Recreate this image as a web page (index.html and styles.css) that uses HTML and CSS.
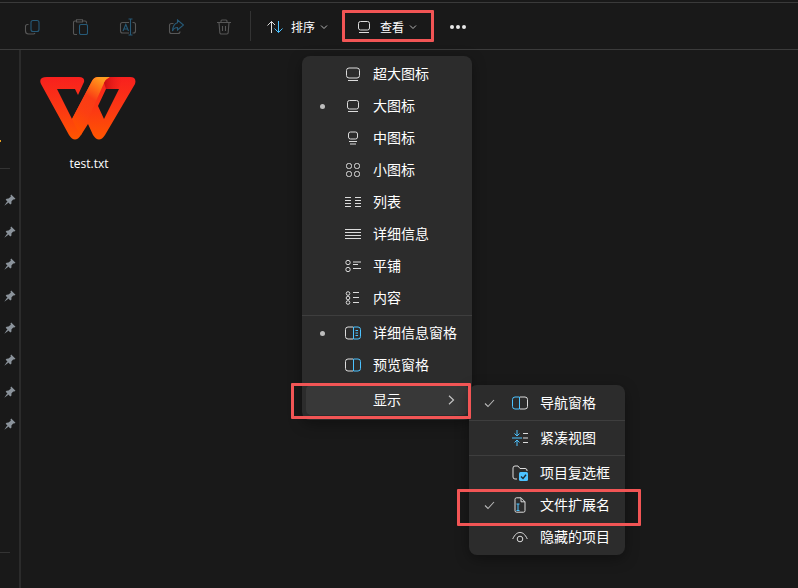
FILE: index.html
```html
<!DOCTYPE html>
<html lang="zh-CN">
<head>
<meta charset="utf-8">
<title>查看</title>
<link rel="stylesheet" href="styles.css">
</head>
<body>
<div class="page">
  <div class="topline"></div>
  <header class="toolbar">
    <div class="tool"><svg class="ic" width="16" height="16" viewBox="0 0 16 16" fill="none"><path class="dim" d="M4.500 5.500 H3.500 A2 2 0 0 0 1.500 7.500 V12 A3 3 0 0 0 4.500 15 H9 A2 2 0 0 0 11 14"/><rect class="dimblue" x="7" y="1.500" width="8" height="11" rx="2"/></svg></div>
    <div class="tool"><svg class="ic" width="16" height="16" viewBox="0 0 16 16" fill="none"><path class="dim" d="M4 2 H3 A1.500 1.500 0 0 0 1.500 3.500 V14 A1.500 1.500 0 0 0 3 15.500 H5 M11 2 H13 A1.500 1.500 0 0 1 14.500 3.500 V4.500 M4.500 .8 H10.500 V3 H4.500 Z"/><rect class="dimblue" x="7.500" y="5.500" width="8" height="10" rx="1.500"/></svg></div>
    <div class="tool"><svg class="ic" width="18" height="18" viewBox="0 0 18 18" fill="none"><path class="dim" d="M10 4.500 H3.500 A2 2 0 0 0 1.500 6.500 V13 A2 2 0 0 0 3.500 15 H10 M13.500 4.500 H14.500 A2 2 0 0 1 16.500 6.500 V13 A2 2 0 0 1 14.500 15 H13.500"/><path class="dimblue" d="M11.500 1 V17 M9.500 1 H13.500 M9.500 17 H13.500 M4 13 L6.800 6.500 L9.500 13 M5 11 H8.500"/></svg></div>
    <div class="tool"><svg class="ic" width="16" height="16" viewBox="0 0 16 16" fill="none"><path class="dim" d="M5.500 4.500 H3.500 A2 2 0 0 0 1.500 6.500 V12.500 A2 2 0 0 0 3.500 14.500 H10 A2 2 0 0 0 12 12.500"/><path class="dimblue" d="M9.500 1 L15.500 6 L9.500 11 V8.500 C7.500 8.500 5.500 9.500 4.500 12 C4.800 8 6.500 4.500 9.500 3.800 Z"/></svg></div>
    <div class="tool"><svg class="ic" width="16" height="16" viewBox="0 0 16 16" fill="none"><path class="dim" d="M1 3.500 H15 M5 3.500 V2 A1 1 0 0 1 6 1 H10 A1 1 0 0 1 11 2 V3.500 M3 3.500 L3.800 13.500 A1.500 1.500 0 0 0 5.300 15 H10.700 A1.500 1.500 0 0 0 12.200 13.500 L13 3.500 M6.500 7 V12 M9.500 7 V12"/></svg></div>
    <div class="tb-divider"></div>
    <div class="tb-btn sort">
      <svg class="ic" width="16" height="14" viewBox="0 0 16 14" fill="none"><path class="line" d="M4.500 13 V1.500 M0.500 5.500 L4.500 1.500 L8 5"/><path class="blue" d="M11.500 1 V12.500 M7.500 8.500 L11.500 12.500 L15.500 8.500"/></svg>
      <span class="tb-label">排序</span>
      <svg class="chev" width="8" height="6" viewBox="0 0 8 6" fill="none"><path d="M1 1.500 L4 4.500 L7 1.500"/></svg>
    </div>
    <div class="tb-btn view">
      <svg class="ic" width="14" height="14" viewBox="0 0 14 14" fill="none"><rect class="line" x="1.500" y="1.500" width="11" height="8.500" rx="2"/><path class="line" d="M2 12.500 H12"/></svg>
      <span class="tb-label">查看</span>
      <svg class="chev" width="8" height="6" viewBox="0 0 8 6" fill="none"><path d="M1 1.500 L4 4.500 L7 1.500"/></svg>
    </div>
    <div class="dots"><i></i><i></i><i></i></div>
  </header>

  <div class="main">
    <aside class="sidebar">
      <div class="spark"></div>
      <div class="side-sep first"></div>
      <ul class="pins">
        <li><svg class="pin" width="12" height="12" viewBox="0 0 12 12"><path d="M7.200 .5 L11.500 4.800 L10.200 5.600 L9.200 5.400 L7.400 7.600 L7.500 9.500 L6.300 10.500 L1.700 5.800 L2.600 4.700 L4.500 4.600 L6.800 2.800 L6.500 1.500 Z M3.200 7.600 L.3 11.700 L4.400 8.800 Z"/></svg></li>
        <li><svg class="pin" width="12" height="12" viewBox="0 0 12 12"><path d="M7.200 .5 L11.500 4.800 L10.200 5.600 L9.200 5.400 L7.400 7.600 L7.500 9.500 L6.300 10.500 L1.700 5.800 L2.600 4.700 L4.500 4.600 L6.800 2.800 L6.500 1.500 Z M3.200 7.600 L.3 11.700 L4.400 8.800 Z"/></svg></li>
        <li><svg class="pin" width="12" height="12" viewBox="0 0 12 12"><path d="M7.200 .5 L11.500 4.800 L10.200 5.600 L9.200 5.400 L7.400 7.600 L7.500 9.500 L6.300 10.500 L1.700 5.800 L2.600 4.700 L4.500 4.600 L6.800 2.800 L6.500 1.500 Z M3.200 7.600 L.3 11.700 L4.400 8.800 Z"/></svg></li>
        <li><svg class="pin" width="12" height="12" viewBox="0 0 12 12"><path d="M7.200 .5 L11.500 4.800 L10.200 5.600 L9.200 5.400 L7.400 7.600 L7.500 9.500 L6.300 10.500 L1.700 5.800 L2.600 4.700 L4.500 4.600 L6.800 2.800 L6.500 1.500 Z M3.200 7.600 L.3 11.700 L4.400 8.800 Z"/></svg></li>
        <li><svg class="pin" width="12" height="12" viewBox="0 0 12 12"><path d="M7.200 .5 L11.500 4.800 L10.200 5.600 L9.200 5.400 L7.400 7.600 L7.500 9.500 L6.300 10.500 L1.700 5.800 L2.600 4.700 L4.500 4.600 L6.800 2.800 L6.500 1.500 Z M3.200 7.600 L.3 11.700 L4.400 8.800 Z"/></svg></li>
        <li><svg class="pin" width="12" height="12" viewBox="0 0 12 12"><path d="M7.200 .5 L11.500 4.800 L10.200 5.600 L9.200 5.400 L7.400 7.600 L7.500 9.500 L6.300 10.500 L1.700 5.800 L2.600 4.700 L4.500 4.600 L6.800 2.800 L6.500 1.500 Z M3.200 7.600 L.3 11.700 L4.400 8.800 Z"/></svg></li>
        <li><svg class="pin" width="12" height="12" viewBox="0 0 12 12"><path d="M7.200 .5 L11.500 4.800 L10.200 5.600 L9.200 5.400 L7.400 7.600 L7.500 9.500 L6.300 10.500 L1.700 5.800 L2.600 4.700 L4.500 4.600 L6.800 2.800 L6.500 1.500 Z M3.200 7.600 L.3 11.700 L4.400 8.800 Z"/></svg></li>
        <li><svg class="pin" width="12" height="12" viewBox="0 0 12 12"><path d="M7.200 .5 L11.500 4.800 L10.200 5.600 L9.200 5.400 L7.400 7.600 L7.500 9.500 L6.300 10.500 L1.700 5.800 L2.600 4.700 L4.500 4.600 L6.800 2.800 L6.500 1.500 Z M3.200 7.600 L.3 11.700 L4.400 8.800 Z"/></svg></li>
      </ul>
      <div class="side-sep last"></div>
    </aside>
    <div class="side-rule"></div>
    <section class="files">
      <figure class="file">
        <svg class="logo" width="96" height="64" viewBox="40 76 96 64">
          <defs>
            <linearGradient id="wBase" x1="0" y1="0" x2="0" y2="1"><stop offset="0" stop-color="#f8201e"/><stop offset="0.55" stop-color="#fc3a12"/><stop offset="1" stop-color="#ff5600"/></linearGradient>
            <linearGradient id="wStrand" x1="0.7" y1="0" x2="0.3" y2="1"><stop offset="0" stop-color="#ff9c20"/><stop offset="0.18" stop-color="#ff7016"/><stop offset="0.38" stop-color="#f93c16"/><stop offset="0.65" stop-color="#fc3f12"/><stop offset="1" stop-color="#ff5200"/></linearGradient>
            <linearGradient id="wShade" x1="0" y1="0" x2="1" y2="0"><stop offset="0" stop-color="#c80e12"/><stop offset="1" stop-color="#f8201e" stop-opacity="0"/></linearGradient>
          </defs>
          <path fill="url(#wBase)" fill-rule="evenodd" d="M47 77 H79 Q85 77 84 82 L78 95 L75 89 H57 L72 119 L92 81 Q94 77 98 77 H130 Q137 77 135 84 L105 135 Q99 144 93 135 L88 124 L81 135 Q75 144 69 135 L41 84 Q38 77 47 77 Z M106 89 H119 L104 119 L98 106 Z"/>
          <path fill="url(#wStrand)" d="M92 81 Q94 77 98 77 H110 Q106 79 104 83 L81 135 L76 127 L72 119 Z"/>
          <path fill="url(#wShade)" d="M110 77 H124 L118 89 H106 L104 83 Q106 79 110 77 Z"/>
        </svg>
        <figcaption class="file-name">test.txt</figcaption>
      </figure>
    </section>
  </div>

  <nav class="menu menu-view">
    <div class="row"><span class="mark"></span><span class="slot"><svg class="ic" width="16" height="16" viewBox="0 0 16 16" fill="none"><rect class="line" x="1.500" y="2" width="13" height="10" rx="2.500"/><path class="line" d="M3 14.500 H13"/></svg></span><span class="txt">超大图标</span></div>
    <div class="row"><span class="mark"><i class="bullet"></i></span><span class="slot"><svg class="ic" width="14" height="14" viewBox="0 0 14 14" fill="none"><rect class="line" x="1.500" y="1.500" width="11" height="8.500" rx="2"/><path class="line" d="M2 12.500 H12"/></svg></span><span class="txt">大图标</span></div>
    <div class="row"><span class="mark"></span><span class="slot"><svg class="ic" width="12" height="14" viewBox="0 0 12 14" fill="none"><rect class="line" x="1.500" y="1" width="9" height="7" rx="2"/><path class="line" d="M2 10.500 H10 M3 13 H9"/></svg></span><span class="txt">中图标</span></div>
    <div class="row"><span class="mark"></span><span class="slot"><svg class="ic" width="16" height="16" viewBox="0 0 16 16" fill="none"><rect class="line" x="1.500" y="1.500" width="5" height="5" rx="2"/><rect class="line" x="9.500" y="1.500" width="5" height="5" rx="2"/><rect class="line" x="1.500" y="9.500" width="5" height="5" rx="2"/><rect class="line" x="9.500" y="9.500" width="5" height="5" rx="2"/></svg></span><span class="txt">小图标</span></div>
    <div class="row"><span class="mark"></span><span class="slot"><svg class="ic" width="16" height="12" viewBox="0 0 16 12" fill="none"><path class="line" d="M0 1.500 H6 M0 4.500 H6 M0 7.500 H6 M0 10.500 H6 M10 1.500 H16 M10 4.500 H16 M10 7.500 H16 M10 10.500 H16"/></svg></span><span class="txt">列表</span></div>
    <div class="row"><span class="mark"></span><span class="slot"><svg class="ic" width="16" height="12" viewBox="0 0 16 12" fill="none"><path class="line" d="M0 1.500 H16 M0 4.500 H16 M0 7.500 H16 M0 10.500 H16"/></svg></span><span class="txt">详细信息</span></div>
    <div class="row"><span class="mark"></span><span class="slot"><svg class="ic" width="16" height="14" viewBox="0 0 16 14" fill="none"><circle class="line" cx="3" cy="3.500" r="2.200"/><circle class="line" cx="3" cy="10.500" r="2.200"/><path class="line" d="M8 3 H16 M8 5.500 H13 M8 9.500 H16"/></svg></span><span class="txt">平铺</span></div>
    <div class="row"><span class="mark"></span><span class="slot"><svg class="ic" width="16" height="14" viewBox="0 0 16 14" fill="none"><circle class="line" cx="3" cy="2.500" r="1.800"/><circle class="line" cx="3" cy="7" r="1.800"/><circle class="line" cx="3" cy="11.500" r="1.800"/><path class="line" d="M8 1.500 H14 M8 6.500 H14 M8 11.500 H14"/></svg></span><span class="txt">内容</span></div>
    <div class="sep"></div>
    <div class="row"><span class="mark"><i class="bullet"></i></span><span class="slot"><svg class="ic" width="16" height="14" viewBox="0 0 16 14" fill="none"><path class="line" d="M8 1 H3 A2.500 2.500 0 0 0 .5 3.500 V10.500 A2.500 2.500 0 0 0 3 13 H8"/><path class="blue" d="M8.500 1 H13 A2.500 2.500 0 0 1 15.500 3.500 V10.500 A2.500 2.500 0 0 1 13 13 H8.500 Z M10.500 4.500 H13 M10.500 7 H13 M10.500 9.500 H13"/></svg></span><span class="txt">详细信息窗格</span></div>
    <div class="row"><span class="mark"></span><span class="slot"><svg class="ic" width="16" height="14" viewBox="0 0 16 14" fill="none"><path class="line" d="M8 1 H3 A2.500 2.500 0 0 0 .5 3.500 V10.500 A2.500 2.500 0 0 0 3 13 H8"/><path class="blue" d="M8.500 1 H13 A2.500 2.500 0 0 1 15.500 3.500 V10.500 A2.500 2.500 0 0 1 13 13 H8.500 Z"/></svg></span><span class="txt">预览窗格</span></div>
    <div class="row row-open"><span class="mark"></span><span class="slot"></span><span class="txt">显示</span><svg class="arrow" width="7" height="10" viewBox="0 0 7 10" fill="none"><path d="M1 .8 L5.500 5 L1 9.200"/></svg></div>
  </nav>

  <nav class="menu menu-show">
    <div class="row"><span class="mark"><svg class="check" width="11" height="9" viewBox="0 0 11 9" fill="none"><path d="M1 4.500 L4 7.500 L10 1"/></svg></span><span class="slot"><svg class="ic" width="16" height="14" viewBox="0 0 16 14" fill="none"><path class="blue" d="M7.500 1 H3 A2.500 2.500 0 0 0 .5 3.500 V10.500 A2.500 2.500 0 0 0 3 13 H7.500 Z"/><path class="line" d="M8 1 H13 A2.500 2.500 0 0 1 15.500 3.500 V10.500 A2.500 2.500 0 0 1 13 13 H8"/></svg></span><span class="txt">导航窗格</span></div>
    <div class="sep"></div>
    <div class="row"><span class="mark"></span><span class="slot"><svg class="ic" width="16" height="16" viewBox="0 0 16 16" fill="none"><path class="blue" d="M0 8 H10 M5 0 V5.500 M2.500 3.500 L5 6 L7.500 3.500 M5 16 V10.500 M2.500 12.500 L5 10 L7.500 12.500"/><path class="line" d="M11 3.500 H16 M11 8 H16 M11 12.500 H16"/></svg></span><span class="txt">紧凑视图</span></div>
    <div class="sep"></div>
    <div class="row"><span class="mark"></span><span class="slot"><svg class="ic" width="16" height="16" viewBox="0 0 16 16" fill="none"><path class="line" d="M5 14 H3 A2 2 0 0 1 1 12 V3 A2 2 0 0 1 3 1 H6 L8 3.500 H13 A2 2 0 0 1 15 5 V6"/><rect class="fill-blue" x="7" y="7" width="9" height="9" rx="1.500"/><path class="tick" d="M9 11.500 L11 13.500 L14 9.800"/></svg></span><span class="txt">项目复选框</span></div>
    <div class="row"><span class="mark"><svg class="check" width="11" height="9" viewBox="0 0 11 9" fill="none"><path d="M1 4.500 L4 7.500 L10 1"/></svg></span><span class="slot"><svg class="ic" width="12" height="16" viewBox="0 0 12 16" fill="none"><path class="line" d="M7 .8 H2.500 A1.500 1.500 0 0 0 1 2.300 V13.700 A1.500 1.500 0 0 0 2.500 15.200 H9.500 A1.500 1.500 0 0 0 11 13.700 V4.800 Z M7 .8 V4.800 H11"/><path class="blue" d="M2.500 7 H5.500 M2.500 13.500 H5.500 M4 7 V13.500"/></svg></span><span class="txt">文件扩展名</span></div>
    <div class="row"><span class="mark"></span><span class="slot"><svg class="ic" width="16" height="12" viewBox="0 0 16 12" fill="none"><path class="line" d="M.7 8 C3 3 5.500 1.500 8 1.500 C10.500 1.500 13 3 15.300 8"/><circle class="line" cx="8" cy="8" r="2.800"/></svg></span><span class="txt">隐藏的项目</span></div>
  </nav>

  <div class="callout callout-view"></div>
  <div class="callout callout-show"></div>
  <div class="callout callout-ext"></div>
</div>
</body>
</html>
```

FILE: styles.css
```css
* { box-sizing: border-box; }
html, body { margin: 0; padding: 0; }
body { background: #191919; }
.page {
  position: relative;
  width: 798px;
  height: 588px;
  overflow: hidden;
  background: #191919;
  color: #fff;
  font-family: "Noto Sans CJK SC", "Noto Sans", sans-serif;
}
.topline { height: 3px; border-bottom: 1px solid #3a3a3a; }

.toolbar {
  display: flex;
  align-items: center;
  height: 47px;
  padding: 2px 0 0 8px;
  border-bottom: 1px solid #3b3b3b;
}
.tool { display: flex; align-items: center; justify-content: center; width: 48px; height: 44px; }
.ic { display: block; flex: none; }
.dim { stroke: #575757; stroke-width: 1.1; }
.dimblue { stroke: #265a78; stroke-width: 1.1; }
.line { stroke: #dcdcdc; stroke-width: 1; }
.blue { stroke: #4cc2ff; stroke-width: 1; }
.fill-blue { fill: #4cc2ff; }
.tick { stroke: #1c2a33; stroke-width: 1.4; }
.tb-divider { width: 1px; height: 30px; margin: -2px 0 0 2px; background: #333; }
.tb-btn { display: flex; align-items: center; }
.sort { margin-left: 16px; }
.sort .tb-label { margin-left: 8px; }
.view { margin-left: 29px; }
.view .tb-label { margin-left: 9px; }
.tb-label { font-size: 12px; line-height: 16px; color: #fff; }
.chev { margin-left: 5px; }
.chev path { stroke: #b5b5b5; stroke-width: 1; }
.dots { display: flex; gap: 2px; margin-left: 33px; }
.dots i { display: block; width: 4px; height: 4px; border-radius: 50%; background: #e8e8e8; }

.main { display: flex; height: 538px; }
.sidebar { width: 19px; flex: none; }
.spark { width: 1px; height: 2px; margin-top: 90px; background: #e8a020; }
.side-sep { width: 10px; height: 1px; background: #333; }
.side-sep.first { margin-top: 26px; }
.side-sep.last { margin-top: 112px; }
.pins { list-style: none; margin: 15px 0 0; padding: 0; }
.pins li { display: flex; align-items: center; justify-content: center; height: 32px; }
.pin { fill: #8b939b; }
.side-rule { width: 2px; flex: none; background: #2b2b2b; }
.files { padding: 26px 0 0 19px; }
.file { margin: 0; width: 96px; }
.logo { display: block; }
.file-name {
  margin-top: 16px;
  padding-left: 2px;
  font-family: "Open Sans", "Noto Sans", sans-serif;
  font-size: 12px;
  line-height: 16px;
  text-align: center;
  color: #fff;
}

.menu {
  position: absolute;
  background: #2c2c2c;
  border-radius: 8px;
  font-size: 14px;
  color: #fff;
  box-shadow: 0 4px 14px rgba(0, 0, 0, .35);
}
.menu-view { left: 302px; top: 56px; width: 170px; padding: 2px 0 5px; }
.menu-show { left: 469px; top: 385px; width: 156px; padding: 2px 0; }
.row { display: flex; align-items: center; height: 32px; line-height: 20px; }
.mark { display: flex; align-items: center; justify-content: center; flex: none; width: 40px; }
.slot { display: flex; align-items: center; justify-content: center; flex: none; width: 22px; margin-right: 9px; }
.txt { padding-bottom: 2px; }
.bullet { display: block; width: 5px; height: 5px; border-radius: 50%; background: #bdbdbd; }
.check path { stroke: #b8b8b8; stroke-width: 1.1; }
.sep { height: 1px; margin: 1px 0; background: #3e3e3e; }
.row-open {
  height: 30px;
  margin: 4px 4px 0;
  background: #383838;
  border-radius: 5px;
}
.row-open .mark { width: 36px; }
.arrow { margin-left: auto; margin-right: 13px; }
.arrow path { stroke: #c4c4c4; stroke-width: 1.2; }

.callout { position: absolute; border: 3px solid #f25555; border-radius: 1px; }
.callout-view { left: 342px; top: 10px; width: 92px; height: 32px; }
.callout-show { left: 291px; top: 383px; width: 180px; height: 36px; }
.callout-ext { left: 457px; top: 489px; width: 184px; height: 37px; }
```
